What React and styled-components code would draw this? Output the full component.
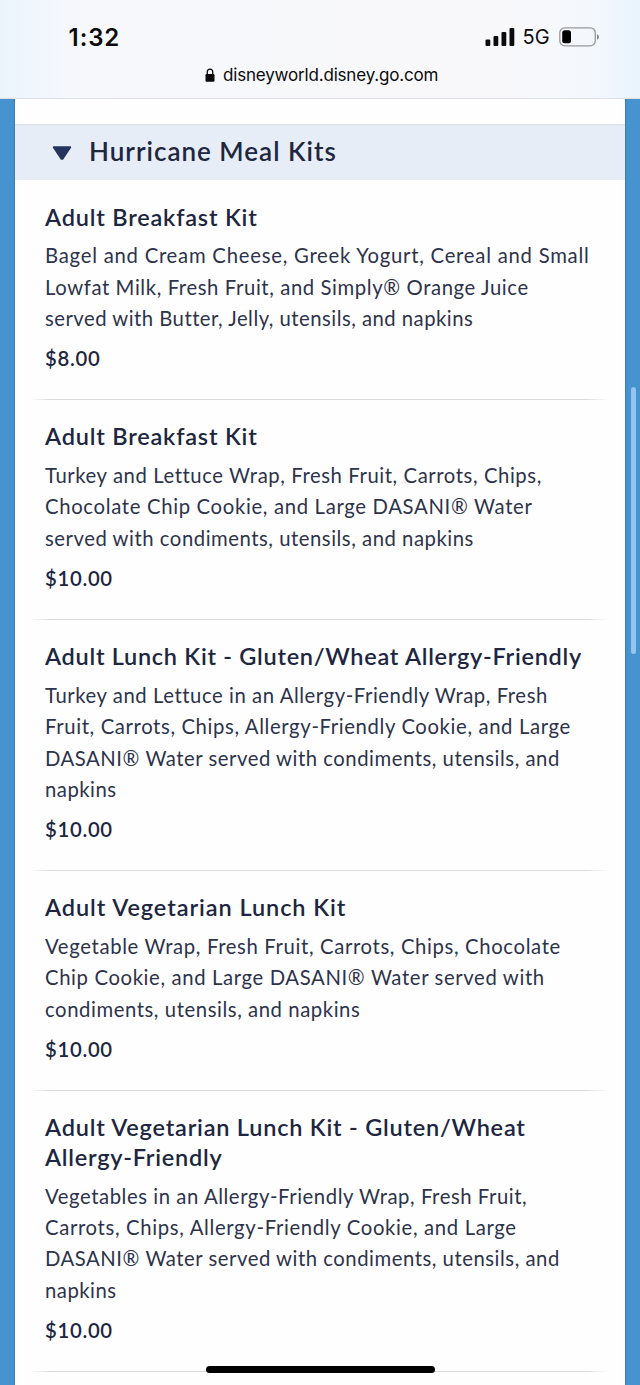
import React from 'react'
import styled, { createGlobalStyle } from 'styled-components'

const GlobalStyle = createGlobalStyle`
  * {
    box-sizing: border-box;
  }
  body {
    margin: 0;
    background: #4793d0;
  }
`

const Screen = styled.div`
  position: relative;
  width: 640px;
  height: 1385px;
  overflow: hidden;
  background: #4793d0;
  font-family: Lato, 'Liberation Sans', sans-serif;
  color: #20263f;
`

const BrowserBar = styled.header`
  position: relative;
  z-index: 1;
  height: 99px;
  border-bottom: 1px solid #dedfe2;
  background: linear-gradient(90deg, #eaf5fb 0, #f1f6fd 36px, #f7f8fb 90px, #f8f8fa 500px, #f4f8fd 590px, #e9f4fd 640px);
  font-family: Inter, 'Liberation Sans', sans-serif;
  color: #0b0b0d;
`

const StatusRow = styled.div`
  display: flex;
  align-items: center;
  justify-content: space-between;
  height: 62px;
  padding: 12px 40.4px 0 68.6px;
`

const Time = styled.div`
  font-size: 24px;
  font-weight: 600;
  letter-spacing: 0.9px;
`

const StatusIcons = styled.div`
  display: flex;
  align-items: center;
`

const Network = styled.span`
  margin: 0 9px 0 8px;
  font-size: 20px;
`

const AddressRow = styled.div`
  display: flex;
  align-items: center;
  gap: 8px;
  height: 26px;
  padding-left: 205px;
  font-size: 17px;
`

const Address = styled.span`
  letter-spacing: -0.18px;
`

const Page = styled.main`
  width: 610px;
  height: 1286px;
  margin: 0 auto;
  padding-top: 25px;
  background: #fefefe;
  box-shadow: 0 0 2px rgba(20, 60, 100, 0.6);
`

const SectionHeader = styled.div`
  display: flex;
  align-items: center;
  gap: 17px;
  height: 56.4px;
  padding-left: 37px;
  border-top: 1px solid #dadfe6;
  background: #e6edf6;
`

const SectionTitle = styled.h2`
  margin: 0;
  padding-bottom: 3px;
  font-size: 26px;
  font-weight: 600;
  line-height: 52px;
  letter-spacing: 1px;
`

const Item = styled.article`
  padding: 21.3px 30px 26.7px;
  background: linear-gradient(90deg, transparent 14px, #d9dadd 36px, #d9dadd 570px, transparent 594px) bottom / 100% 1px no-repeat;
`

const Line = styled.span`
  display: block;
  width: max-content;
  letter-spacing: ${({ $tracking }) => $tracking || 0}px;
`

const ItemTitle = styled.h3`
  margin: 0 0 8.7px;
  font-size: 23.5px;
  font-weight: 600;
  line-height: 30px;
`

const Description = styled.p`
  margin: 0;
  font-size: 20.3px;
  line-height: 31.4px;
  color: #2d334b;
`

const Price = styled.div`
  margin-top: 8.8px;
  font-size: 20.3px;
  font-weight: 600;
  line-height: 30px;
  letter-spacing: 0.7px;
`

const ScrollThumb = styled.div`
  position: absolute;
  top: 387px;
  right: 4px;
  width: 5px;
  height: 267px;
  border-radius: 3px;
  background: #93c5f0;
`

const HomeIndicator = styled.div`
  position: absolute;
  left: 206px;
  bottom: 12px;
  width: 229px;
  height: 7px;
  border-radius: 4px;
  background: #000;
`

const SignalIcon = () => (
  <svg width="30" height="20" viewBox="0 0 30 20" fill="#0b0b0d">
    <rect x="0.5" y="12.5" width="4.8" height="6.5" rx="1.1" />
    <rect x="8.5" y="9" width="4.8" height="10" rx="1.1" />
    <rect x="16.5" y="5" width="4.8" height="14" rx="1.1" />
    <rect x="24.5" y="1" width="4.8" height="18" rx="1.1" />
  </svg>
)

const BatteryIcon = () => (
  <svg width="41" height="20" viewBox="0 0 41 20">
    <rect x="0.8" y="0.8" width="35.5" height="18" rx="5" fill="none" stroke="#96989d" strokeWidth="1.3" />
    <rect x="3.2" y="3.3" width="8.8" height="13" rx="2.5" fill="#000" />
    <path d="M38 7.2c2.6 1 2.6 4.4 0 5.4z" fill="#85878c" />
  </svg>
)

const LockIcon = () => (
  <svg width="10" height="14" viewBox="0 0 10 14">
    <path d="M2.3 7V4a2.7 2.9 0 0 1 5.4 0v3" fill="none" stroke="#0b0b0d" strokeWidth="1.3" />
    <rect x="0.5" y="6" width="9" height="7.7" rx="1.2" fill="#0b0b0d" />
  </svg>
)

const ArrowIcon = () => (
  <svg width="20" height="14" viewBox="0 0 20 14">
    <path d="M1.7 1.2h16.6L11 12.3q-1 1.2-2 0z" fill="#25345d" stroke="#25345d" strokeWidth="1.8" strokeLinejoin="round" />
  </svg>
)

// each line is [text, letter spacing]
const kits = [
  {
    title: [['Adult Breakfast Kit', 0.8]],
    description: [
      ['Bagel and Cream Cheese, Greek Yogurt, Cereal and Small', 0.76],
      ['Lowfat Milk, Fresh Fruit, and Simply® Orange Juice', 0.6],
      ['served with Butter, Jelly, utensils, and napkins', 0.48],
    ],
    price: '$8.00',
  },
  {
    title: [['Adult Breakfast Kit', 0.8]],
    description: [
      ['Turkey and Lettuce Wrap, Fresh Fruit, Carrots, Chips,', 0.58],
      ['Chocolate Chip Cookie, and Large DASANI® Water', 0.67],
      ['served with condiments, utensils, and napkins', 0.53],
    ],
    price: '$10.00',
  },
  {
    title: [['Adult Lunch Kit - Gluten/Wheat Allergy-Friendly', 0.72]],
    description: [
      ['Turkey and Lettuce in an Allergy-Friendly Wrap, Fresh', 0.56],
      ['Fruit, Carrots, Chips, Allergy-Friendly Cookie, and Large', 0.63],
      ['DASANI® Water served with condiments, utensils, and', 0.53],
      ['napkins', 0.5],
    ],
    price: '$10.00',
  },
  {
    title: [['Adult Vegetarian Lunch Kit', 0.93]],
    description: [
      ['Vegetable Wrap, Fresh Fruit, Carrots, Chips, Chocolate', 0.64],
      ['Chip Cookie, and Large DASANI® Water served with', 0.63],
      ['condiments, utensils, and napkins', 0.57],
    ],
    price: '$10.00',
  },
  {
    title: [
      ['Adult Vegetarian Lunch Kit - Gluten/Wheat', 0.78],
      ['Allergy-Friendly', 0.75],
    ],
    description: [
      ['Vegetables in an Allergy-Friendly Wrap, Fresh Fruit,', 0.56],
      ['Carrots, Chips, Allergy-Friendly Cookie, and Large', 0.66],
      ['DASANI® Water served with condiments, utensils, and', 0.53],
      ['napkins', 0.5],
    ],
    price: '$10.00',
  },
]

const renderLines = (lines) =>
  lines.map(([text, tracking]) => (
    <Line key={text} $tracking={tracking}>{text}</Line>
  ))

const App = () => {
  return (
    <Screen>
      <GlobalStyle />
      <BrowserBar>
        <StatusRow>
          <Time>1:32</Time>
          <StatusIcons>
            <SignalIcon />
            <Network>5G</Network>
            <BatteryIcon />
          </StatusIcons>
        </StatusRow>
        <AddressRow>
          <LockIcon />
          <Address>disneyworld.disney.go.com</Address>
        </AddressRow>
      </BrowserBar>
      <Page>
        <SectionHeader>
          <ArrowIcon />
          <SectionTitle>Hurricane Meal Kits</SectionTitle>
        </SectionHeader>
        {kits.map((kit, index) => (
          <Item key={index}>
            <ItemTitle>{renderLines(kit.title)}</ItemTitle>
            <Description>{renderLines(kit.description)}</Description>
            <Price>{kit.price}</Price>
          </Item>
        ))}
      </Page>
      <ScrollThumb />
      <HomeIndicator />
    </Screen>
  )
}

export default App
